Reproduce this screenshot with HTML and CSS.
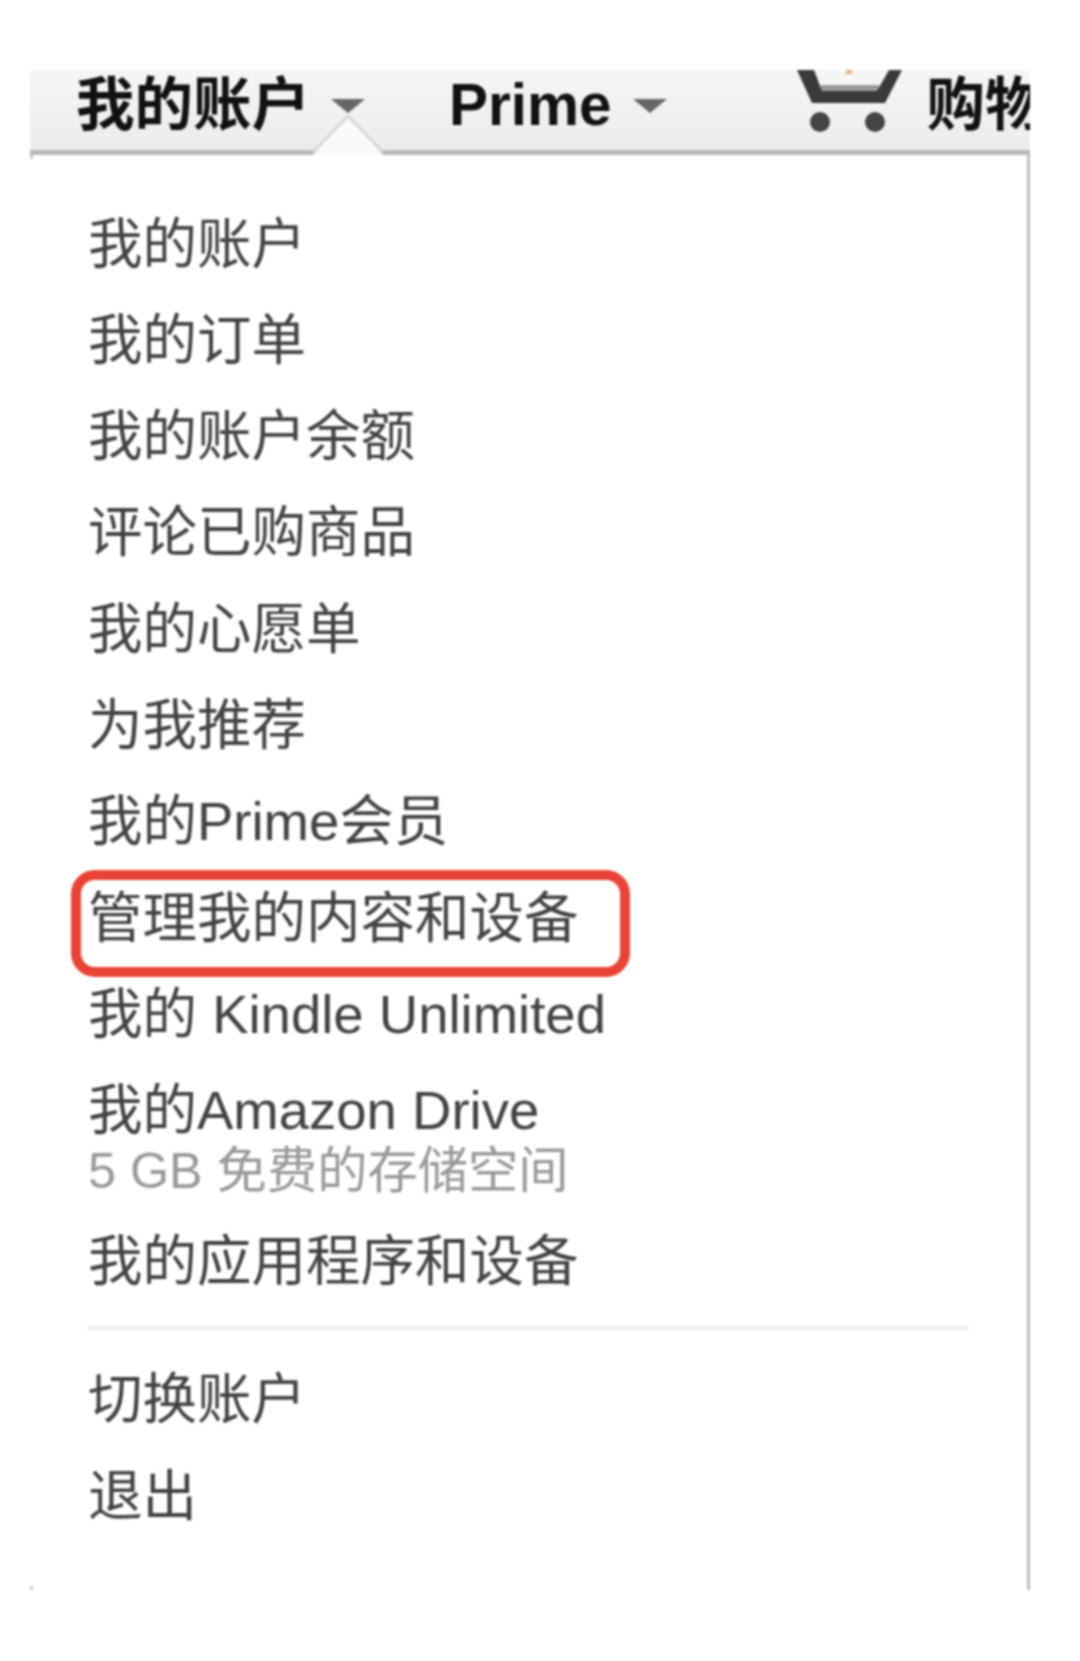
FILE: index.html
```html
<!DOCTYPE html>
<html lang="zh-CN">
<head>
<meta charset="utf-8">
<title>我的账户</title>
<link rel="stylesheet" href="styles.css">
</head>
<body>
<div class="menu">
  <nav class="nav">
    <span class="nav-label">我的账户</span><span class="nav-arrow first"></span>
    <span class="nav-label prime">Prime</span><span class="nav-arrow second"></span>
    <svg class="cart" viewBox="0 0 106 64" aria-hidden="true">
      <rect x="24" y="15" width="58" height="7" fill="#9a9a9a"/>
      <path d="M0 0 L15 33 H88 L105 0 H92 L80 21 H25 L17 0 Z" fill="#3a3a3a"/>
      <circle cx="23" cy="52" r="10" fill="#444"/>
      <circle cx="78" cy="52" r="10" fill="#444"/>
      <rect x="49" y="0" width="6" height="4" fill="#f2b468"/>
    </svg>
    <span class="nav-label cart-label">购物车</span>
  </nav>
  <div class="panel">
    <svg class="caret" viewBox="0 0 70 40" aria-hidden="true">
      <path d="M0 40 L35 1 L70 40 Z" fill="#fafafa"/>
      <path d="M0 37 L35 1 L70 37" fill="none" stroke="#dadada" stroke-width="3"/>
    </svg>
    <ul class="list">
      <li class="row">我的账户</li>
      <li class="row">我的订单</li>
      <li class="row">我的账户余额</li>
      <li class="row">评论已购商品</li>
      <li class="row">我的心愿单</li>
      <li class="row">为我推荐</li>
      <li class="row">我的Prime会员</li>
      <li class="row marked">管理我的内容和设备</li>
      <li class="row">我的 Kindle Unlimited</li>
      <li class="row">我的Amazon Drive</li>
      <li class="sub">5 GB 免费的存储空间</li>
      <li class="row">我的应用程序和设备</li>
      <li class="divider"></li>
      <li class="row">切换账户</li>
      <li class="row">退出</li>
    </ul>
  </div>
</div>
</body>
</html>
```
FILE: styles.css
```css
*, *::before, *::after { box-sizing: border-box; }
html, body { margin: 0; padding: 0; background: #fff; }
body {
  height: 1661px;
  overflow: hidden;
  font-family: "Liberation Sans", "Noto Sans CJK SC", sans-serif;
}
.menu {
  width: 1000px;
  margin: 70px 0 0 30px;
  filter: blur(1.2px);
}
.nav {
  height: 80px;
  padding: 0 0 11px 46px;
  display: flex;
  align-items: center;
  overflow: hidden;
  white-space: nowrap;
  background: linear-gradient(#f6f6f6, #ececec);
}
.nav-label {
  font-size: 58.5px;
  font-weight: 700;
  line-height: 66px;
  color: #111;
  flex: none;
}
.nav-arrow {
  flex: none;
  width: 0;
  height: 0;
  margin-top: 2px;
  border-style: solid;
  border-width: 14px 17px 0;
  border-color: #666 transparent transparent;
}
.nav-arrow.first { margin-left: 21px; }
.nav-arrow.second { margin-left: 21px; }
.prime { margin-left: 84px; }
.cart {
  flex: none;
  width: 106px;
  height: 64px;
  margin-left: 130px;
  align-self: flex-start;
}
.cart-label { margin-left: 24px; }
.panel {
  position: relative;
  height: 1440px;
  border-top: 5px solid #b9b9b9;
  border-right: 3px solid #bdbdbd;
}
.panel::before,
.panel::after {
  content: "";
  position: absolute;
  left: 0;
  width: 3px;
  height: 4px;
  background: #cfcfcf;
}
.panel::before { top: 0; }
.panel::after { bottom: 0; }
.caret {
  position: absolute;
  left: 283px;
  top: -40px;
  width: 70px;
  height: 40px;
  overflow: visible;
}
.list {
  list-style: none;
  margin: 0;
  padding: 41.5px 0 0 58px;
  color: #424242;
}
.row {
  position: relative;
  font-size: 54.5px;
  line-height: 96.3px;
  height: 96.3px;
  white-space: nowrap;
}
.marked::after {
  content: "";
  position: absolute;
  left: -17px;
  top: -1px;
  width: 559px;
  height: 107px;
  border: 10px solid #ea4335;
  border-radius: 24px;
}
.sub {
  font-size: 50.3px;
  line-height: 56px;
  color: #999;
  margin: -16.5px 0 15px;
  white-space: nowrap;
}
.divider {
  height: 4px;
  width: 880px;
  margin: 16px 0 22px;
  background: #eee;
}
```
